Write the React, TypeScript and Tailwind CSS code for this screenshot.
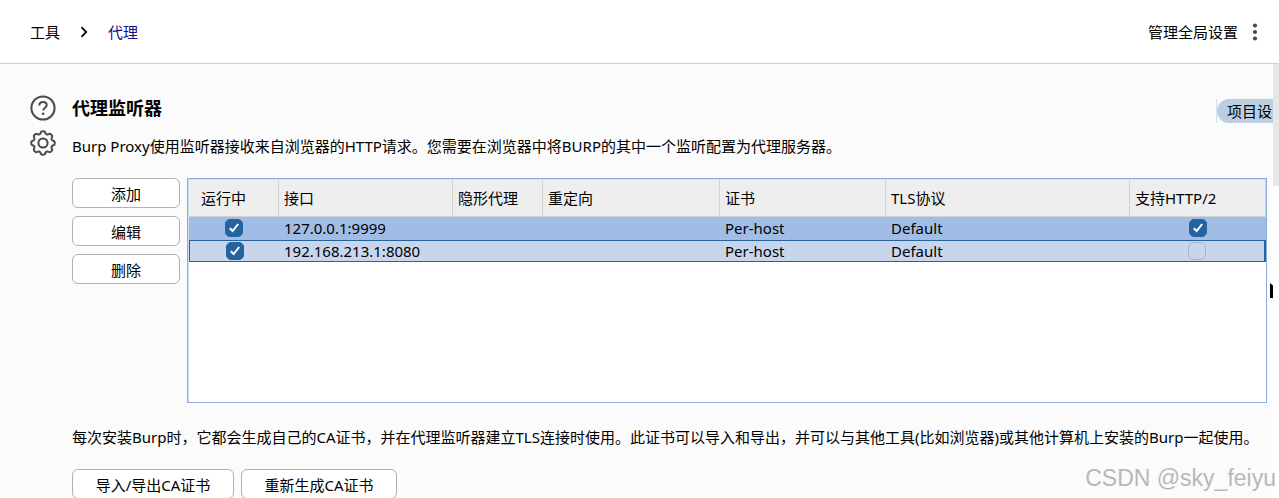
import React from "react";

type Listener = {
  running: boolean;
  address: string;
  certificate: string;
  tls: string;
  http2: boolean;
  focused?: boolean;
};

const listeners: Listener[] = [
  { running: true, address: "127.0.0.1:9999", certificate: "Per-host", tls: "Default", http2: true },
  { running: true, address: "192.168.213.1:8080", certificate: "Per-host", tls: "Default", http2: false, focused: true },
];

const columns = [
  { label: "运行中", width: "w-[90px]", pad: "pl-3" },
  { label: "接口", width: "w-[174px]", pad: "pl-[5px]" },
  { label: "隐形代理", width: "w-[90px]", pad: "pl-[5px]" },
  { label: "重定向", width: "w-[177px]", pad: "pl-[5px]" },
  { label: "证书", width: "w-[166px]", pad: "pl-[5px]" },
  { label: "TLS协议", width: "", pad: "pl-[5px]" },
  { label: "支持HTTP/2", width: "w-[136px]", pad: "pl-[5px]" },
];

// Outline of an eight-toothed gear with softly rounded teeth.
const gearOutline = Array.from({ length: 144 }, (_, i) => {
  const angle = (i / 144) * Math.PI * 2;
  const radius = 10.5 + 1.3 * Math.tanh(1.5 * Math.cos(8 * angle) + 0.3);
  const x = 13 + radius * Math.cos(angle);
  const y = 13 + radius * Math.sin(angle);
  return `${x.toFixed(2)},${y.toFixed(2)}`;
}).join(" ");

function Tick({ checked, label }: { checked: boolean; label: string }) {
  return (
    <span className="grid place-items-center">
      <input
        type="checkbox"
        defaultChecked={checked}
        aria-label={label}
        className="peer col-start-1 row-start-1 size-[18px] appearance-none rounded-[5px] border border-[#b0b4ba] checked:border-[#25639f] checked:bg-[#25639f]"
      />
      <svg
        viewBox="0 0 18 18"
        className="pointer-events-none invisible col-start-1 row-start-1 size-[18px] peer-checked:visible"
        fill="none"
        stroke="white"
        strokeWidth="2"
      >
        <path d="M4.800 9.300 7.600 12 13.200 5" />
      </svg>
    </span>
  );
}

function ActionButton({ children, className = "" }: { children: React.ReactNode; className?: string }) {
  return (
    <button
      type="button"
      className={`h-[30px] rounded-[6px] border border-[#b5afb2] bg-white pt-px text-center leading-[28px] ${className}`}
    >
      {children}
    </button>
  );
}

function HelpIcon() {
  return (
    <svg viewBox="0 0 26 26" className="size-[26px]" fill="none" stroke="#4a4a4a" strokeWidth="2">
      <circle cx="13" cy="13" r="11.600" />
      <path d="M9.300 10.600c0-2.100 1.600-3.600 3.700-3.600s3.700 1.300 3.700 3.200c0 2.600-3.500 2.500-3.500 5.200" />
      <circle cx="13.100" cy="18.700" r="1.300" fill="#4a4a4a" stroke="none" />
    </svg>
  );
}

function GearIcon() {
  return (
    <svg viewBox="0 0 26 26" className="size-[26px]" fill="none" stroke="#4a4a4a" strokeWidth="2" strokeLinejoin="round">
      <circle cx="13" cy="13" r="4.600" />
      <polygon points={gearOutline} />
    </svg>
  );
}

export default function App() {
  return (
    <div className="relative flex h-screen flex-col overflow-hidden bg-[#fbfbfb] font-['Noto_Sans','Noto_Sans_CJK_SC',sans-serif] text-[15px] leading-[20px] text-black">
      <header className="flex h-16 shrink-0 items-center justify-between border-b border-[#cfcfcf] bg-white pr-[21px] pl-[30px]">
        <nav className="flex items-center pt-px">
          <a href="#tools">工具</a>
          <svg viewBox="0 0 8 12" className="mr-5 ml-5 h-3 w-2" fill="none" stroke="black" strokeWidth="1.800">
            <path d="M1.500 1.200 6.200 6 1.500 10.800" />
          </svg>
          <a href="#proxy" className="text-[#1a0a8c]">代理</a>
        </nav>
        <div className="flex items-center gap-[14px]">
          <a href="#settings">管理全局设置</a>
          <button type="button" aria-label="更多" className="py-1">
            <svg viewBox="0 0 6 18" className="h-[18px] w-[6px]" fill="#4a4a4a">
              <circle cx="3" cy="2.500" r="2.100" />
              <circle cx="3" cy="9" r="2.100" />
              <circle cx="3" cy="15.500" r="2.100" />
            </svg>
          </button>
        </div>
      </header>

      <div className="flex min-h-0 flex-1">
        <main className="flex min-w-0 flex-1 gap-4 overflow-hidden pt-[31px] pl-[30px]">
          <div className="flex w-[26px] shrink-0 flex-col gap-[9px]">
            <HelpIcon />
            <GearIcon />
          </div>
          <div className="min-w-0 flex-1">
            <div className="flex h-[26px] items-start justify-between">
              <h1 className="text-[18px] leading-[26px] font-bold">代理监听器</h1>
              <div className="mt-1 flex h-6 w-[57px] border-l border-[#d5dfeb]">
                <span className="flex-1 overflow-hidden rounded-l-full bg-[#bccfe2] pl-[10px] leading-[24px] whitespace-nowrap">
                  项目设
                </span>
              </div>
            </div>
            <p className="mt-[15px] whitespace-nowrap">
              Burp Proxy使用监听器接收来自浏览器的HTTP请求。您需要在浏览器中将BURP的其中一个监听配置为代理服务器。
            </p>

            <div className="mt-[22px] flex gap-[7px] pr-[6px]">
              <div className="flex w-[108px] shrink-0 flex-col gap-[8px]">
                <ActionButton>添加</ActionButton>
                <ActionButton>编辑</ActionButton>
                <ActionButton>删除</ActionButton>
              </div>
              <div className="h-[225px] min-w-0 flex-1 border border-[#86afdc] bg-white">
                <div className="h-full border-t border-l border-[#cfdff2]">
                  <table className="w-full table-fixed border-separate border-spacing-0">
                    <thead>
                      <tr className="h-[37px]">
                        {columns.map((c) => (
                          <th
                            key={c.label}
                            className={`border-r border-b border-r-[#d2d2d2] border-b-[#d2d2d2] bg-[#eeeeee] p-0 text-left font-normal ${c.width} ${c.pad}`}
                          >
                            {c.label}
                          </th>
                        ))}
                      </tr>
                    </thead>
                    <tbody>
                      {listeners.map((l) => {
                        const row = l.focused
                          ? "h-[22px] border-y border-[#25639f] bg-[#c7d6ec] p-0"
                          : "h-[23px] bg-[#a2bde5] p-0 pb-px";
                        return (
                          <tr key={l.address}>
                            <td className={`${row} ${l.focused ? "border-l" : ""}`}>
                              <Tick checked={l.running} label={`运行中 ${l.address}`} />
                            </td>
                            <td className={`${row} pl-[5px]`}>{l.address}</td>
                            <td className={row} />
                            <td className={row} />
                            <td className={`${row} pl-[5px]`}>{l.certificate}</td>
                            <td className={`${row} pl-[5px]`}>{l.tls}</td>
                            <td className={`${row} ${l.focused ? "border-r-2" : ""}`}>
                              <Tick checked={l.http2} label={`支持HTTP/2 ${l.address}`} />
                            </td>
                          </tr>
                        );
                      })}
                    </tbody>
                  </table>
                </div>
              </div>
            </div>

            <p className="mt-6 whitespace-nowrap">
              每次安装Burp时，它都会生成自己的CA证书，并在代理监听器建立TLS连接时使用。此证书可以导入和导出，并可以与其他工具(比如浏览器)或其他计算机上安装的Burp一起使用。
            </p>
            <div className="mt-[22px] flex gap-[7px]">
              <ActionButton className="w-[162px]">导入/导出CA证书</ActionButton>
              <ActionButton className="w-[156px]">重新生成CA证书</ActionButton>
            </div>
          </div>
        </main>
        <div className="w-[6px] shrink-0 bg-white">
          <div className="h-[122px] bg-[#e6e6e6]" />
        </div>
      </div>

      <svg viewBox="0 0 3 15" className="absolute top-[283px] right-[6px] h-[15px] w-[3px]">
        <path d="M0 0 3 2.500V15H0z" />
      </svg>
      <span className="absolute right-[3px] bottom-[6px] font-['Liberation_Sans',sans-serif] text-[23px] leading-[28px] text-[#b8b8b8]">
        CSDN @sky_feiyu
      </span>
    </div>
  );
}
